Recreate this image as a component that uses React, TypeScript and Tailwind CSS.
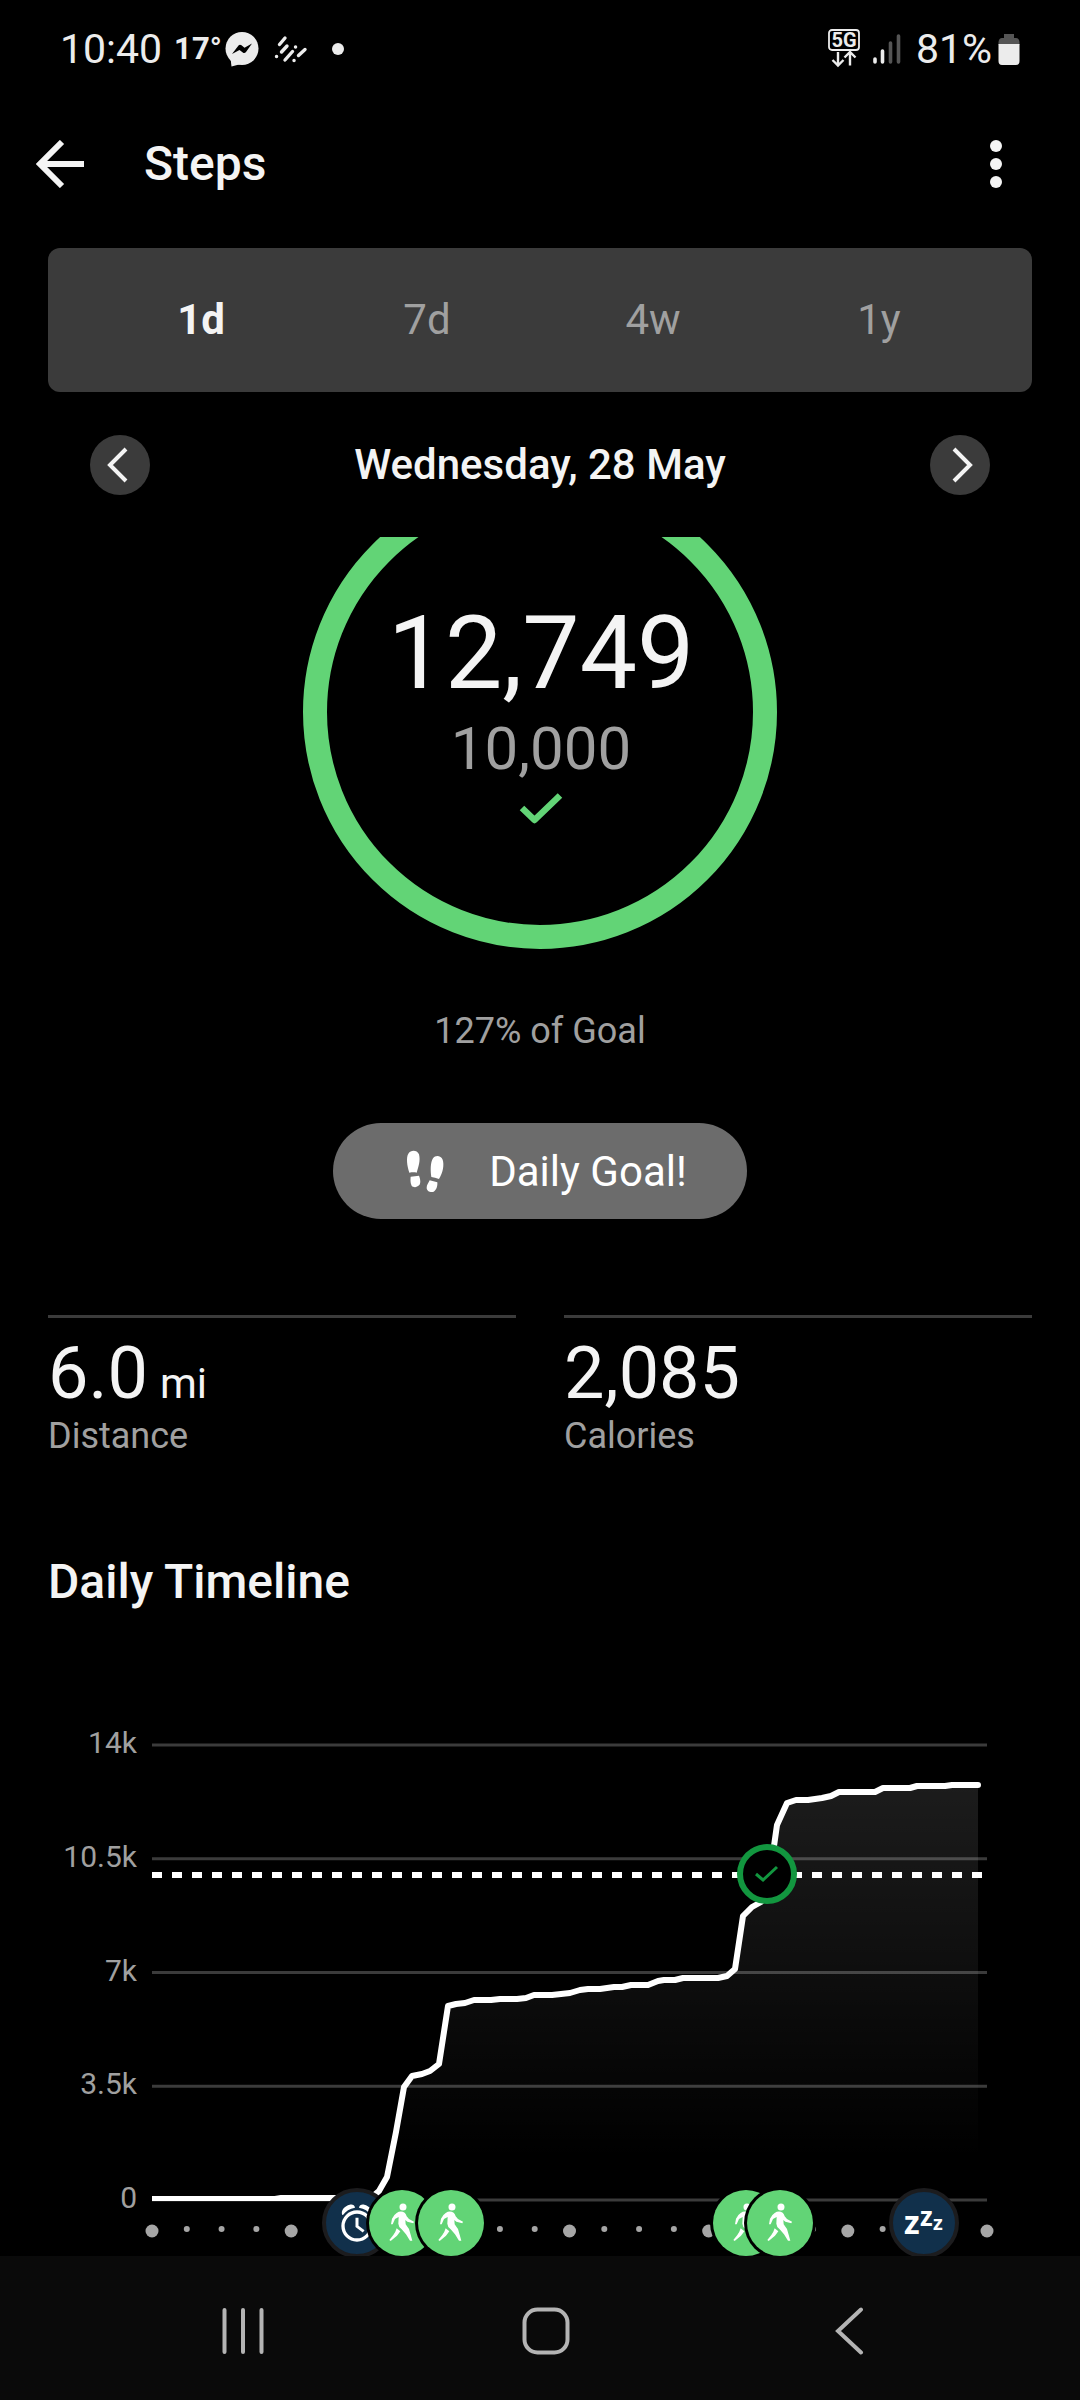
import React, { useState } from 'react';

const RANGES = ['1d', '7d', '4w', '1y'];

const STATS = [
    { value: '6.0', unit: 'mi', label: 'Distance' },
    { value: '2,085', unit: '', label: 'Calories' },
];

const CHART_LEFT = 152;
const CHART_RIGHT = 987;
const CHART_BASE = 590;
const PX_PER_STEP = 455 / 14000;

const Y_TICKS = [
    { value: 14000, label: '14k' },
    { value: 10500, label: '10.5k' },
    { value: 7000, label: '7k' },
    { value: 3500, label: '3.5k' },
    { value: 0, label: '0' },
];

const POINTS = [
    [152, 589], [275, 589], [281, 588], [340, 588], [372, 587], [379, 581], [387, 567], [396, 522],
    [404, 477], [412, 466], [422, 464], [430, 461], [439, 454], [448, 396], [456, 394], [465, 393],
    [474, 390], [491, 390], [500, 389], [517, 389], [526, 388], [534, 385], [552, 385], [570, 383],
    [580, 380], [588, 379], [600, 379], [614, 377], [622, 377], [631, 375], [648, 375], [658, 371],
    [664, 370], [675, 370], [683, 368], [718, 368], [727, 366], [735, 359], [743, 306], [752, 297],
    [761, 292], [770, 264], [777, 215], [787, 193], [796, 190], [808, 190], [822, 188], [831, 186],
    [839, 182], [875, 182], [883, 178], [910, 178], [917, 176], [945, 176], [952, 175], [978, 175],
];

function yFor(steps: number) {
    return CHART_BASE - steps * PX_PER_STEP;
}

function StatusBar() {
    return (
        <div className="flex h-24 items-center justify-between pl-15 pr-[60px] pt-0.5 text-[#ececec]">
            <div className="flex items-center">
                <span className="text-[41px] leading-10">10:40</span>
                <span className="ml-3 text-[31px] font-bold leading-10">17°</span>
                <svg className="ml-0.5 h-9 w-9" viewBox="0 0 36 36">
                    <circle cx="18" cy="17.5" r="16.5" fill="currentColor" />
                    <path d="M6.5 27 L7.5 35.5 L17 33 Z" fill="currentColor" />
                    <path d="M8 23 L14.5 14.5 C15.5 13.4 16.5 13.6 17.5 14.3 L20.5 16.8 L28 12.5 L22 21 C21 22.3 19.8 22.3 18.8 21.5 L15.5 19 Z" fill="#000" />
                </svg>
                <svg className="ml-3 h-8 w-9" viewBox="0 0 36 32" stroke="currentColor" strokeWidth="3.4" strokeLinecap="round">
                    <path d="M13 5 L7.500 11.500 M15 13 L9.500 19 M20.500 18.500 L13 27 M33 16.500 L26.500 22.500 M4.500 23.500 h.1 M23.500 14 h.1 M22 27.500 h.1" />
                </svg>
                <span className="ml-6 h-3 w-3 rounded-full bg-current" />
            </div>
            <div className="flex items-center">
                <svg className="h-10 w-8" viewBox="0 0 32 40" fill="none" stroke="currentColor">
                    <rect x="1" y="1" width="30" height="20" rx="3" strokeWidth="1.8" />
                    <text x="16" y="18" textAnchor="middle" fontSize="20" fontWeight="700" fill="currentColor" stroke="none">5G</text>
                    <path d="M10 23 V36 M4.500 31 L10 36.500 L15.500 31 M22 36.500 V23.500 M16.500 28.500 L22 23 L27.500 28.500" strokeWidth="2.4" />
                </svg>
                <svg className="ml-3 h-8 w-8" viewBox="0 0 32 32" strokeWidth="3.6" strokeLinecap="round">
                    <path d="M3 26 V29 M10.500 18 V29" stroke="currentColor" />
                    <path d="M18.500 10 V29 M26.500 3 V29" stroke="#555" />
                </svg>
                <span className="ml-3 text-[41px] leading-10">81%</span>
                <svg className="ml-1.5 h-8 w-[22px]" viewBox="0 0 22 32">
                    <path d="M6 1 H16 V5 H18 Q21 5 21.500 9 V12 H.5 V9 Q1 5 4 5 H6 Z" fill="#555" />
                    <path d="M.5 11 H21.500 V28 Q21.500 32 18 32 H4 Q.5 32 .5 28 Z" fill="currentColor" />
                </svg>
            </div>
        </div>
    );
}

function WalkBadge({ x }: { x: number }) {
    return (
        <g transform={`translate(${x} 613)`}>
            <circle r="36" fill="#000" />
            <circle r="33" fill="#62d476" />
            <g transform="scale(0.3333)" fill="#fff">
                <circle cx="3" cy="-48" r="10.5" />
                <path d="M-16 -30 Q-4 -38 8 -31 Q12 -28 14 -20 L21 -12 L36 -4 L34 1 L16 -4 L10 -9 L11 4 L21 18 L26 35 L31 53 L24 53 L12 34 L-1 19 Q-11 10 -11 2 L-10 -18 L-21 -12 L-28 4 L-33 4 L-30 -13 Q-24 -25 -16 -30 Z" />
                <path d="M-16 16 L-5 25 L-15 38 L-34 54 L-38 51 L-26 36 Q-19 27 -16 16 Z" />
            </g>
        </g>
    );
}

function DarkBadge({ x, children }: { x: number; children: React.ReactNode }) {
    return (
        <g transform={`translate(${x} 613)`}>
            <circle r="33" fill="#11304b" stroke="#1c1c1e" strokeWidth="4" />
            {children}
        </g>
    );
}

function TimelineChart() {
    const line = POINTS.map(p => p.join(',')).join(' ');
    const step = (CHART_RIGHT - CHART_LEFT) / 24;

    return (
        <svg className="block w-full" viewBox="0 0 1080 646" role="img" aria-label="Daily Timeline">
            <defs>
                <linearGradient id="area" gradientUnits="userSpaceOnUse" x1="0" y1="175" x2="0" y2="590">
                    <stop offset="0" stopColor="#fff" stopOpacity="0.11" />
                    <stop offset="0.9" stopColor="#fff" stopOpacity="0" />
                </linearGradient>
                <clipPath id="plot">
                    <rect x={CHART_LEFT} y="0" width={CHART_RIGHT - CHART_LEFT} height={CHART_BASE + 1} />
                </clipPath>
            </defs>

            {Y_TICKS.map(t => (
                <g key={t.label}>
                    <line x1={CHART_LEFT} x2={CHART_RIGHT} y1={yFor(t.value)} y2={yFor(t.value)} stroke="#3b3b3b" strokeWidth="3" />
                    <text x="137" y={yFor(t.value) + 8} textAnchor="end" fontSize="30" fill="#a0a0a0">{t.label}</text>
                </g>
            ))}

            <polygon points={`${line} 978,590 152,590`} fill="url(#area)" />
            <line x1={CHART_LEFT} x2="982" y1={yFor(10000)} y2={yFor(10000)} stroke="#fff" strokeWidth="6" strokeDasharray="10 10" />
            <polyline points={line} fill="none" stroke="#fff" strokeWidth="6" strokeLinejoin="round" strokeLinecap="round" clipPath="url(#plot)" />

            <circle cx="767" cy="264" r="27" fill="#000" stroke="#12963f" strokeWidth="6" />
            <path d="M756 264 L763 270 L777 257" fill="none" stroke="#12963f" strokeWidth="3" />

            {Array.from({ length: 25 }, (_, i) => (
                <circle
                    key={i}
                    cx={CHART_LEFT + i * step}
                    cy={i % 4 === 0 ? 621 : 619}
                    r={i % 4 === 0 ? 6.5 : 3}
                    fill="#a6a6a6"
                />
            ))}

            <DarkBadge x={357}>
                <g transform="scale(0.3333)" fill="none" stroke="#fff">
                    <circle cx="0" cy="9" r="42" strokeWidth="10" />
                    <path d="M0 -16 V10 L20 25" strokeWidth="9" />
                    <path d="M-44 -24 C-50 -38 -36 -52 -22 -55 C-14 -57 -7 -54 -6 -46 C-22 -43 -34 -36 -42 -24 Z" fill="#fff" stroke="none" />
                    <path d="M44 -24 C50 -38 36 -52 22 -55 C14 -57 7 -54 6 -46 C22 -43 34 -36 42 -24 Z" fill="#fff" stroke="none" />
                </g>
            </DarkBadge>
            <WalkBadge x={402} />
            <WalkBadge x={451} />
            <WalkBadge x={746} />
            <WalkBadge x={780} />
            <DarkBadge x={924}>
                <g fill="#fff" fontWeight="700" className="font-['Open_Sans',sans-serif]">
                    <text x="-20" y="11" fontSize="32">z</text>
                    <text x="-4" y="3" fontSize="26">z</text>
                    <text x="9" y="7" fontSize="20">z</text>
                </g>
            </DarkBadge>
        </svg>
    );
}

export default function App() {
    const [range, setRange] = useState('1d');

    return (
        <div className="flex min-h-screen flex-col bg-black font-[Roboto,sans-serif] text-[#f4f4f4]">
            <StatusBar />

            <header className="flex h-[136px] items-center justify-between px-9">
                <div className="flex items-center gap-15">
                    <button aria-label="Back">
                        <svg className="h-12 w-12" viewBox="0 0 48 48" fill="none" stroke="currentColor" strokeWidth="6">
                            <path d="M48 24 H5 M26 2 L4 24 L26 46" />
                        </svg>
                    </button>
                    <h1 className="text-[48px] font-medium leading-14">Steps</h1>
                </div>
                <button aria-label="More options" className="px-[42px]">
                    <svg className="h-12 w-3" viewBox="0 0 12 48" fill="currentColor">
                        <circle cx="6" cy="6" r="6" />
                        <circle cx="6" cy="24" r="6" />
                        <circle cx="6" cy="42" r="6" />
                    </svg>
                </button>
            </header>

            <main>
                <div className="mx-12 mt-4 grid h-36 grid-cols-4 rounded-xl bg-[#3b3b3b] px-10 pb-0.5">
                    {RANGES.map(r => (
                        <button
                            key={r}
                            onClick={() => setRange(r)}
                            className={`text-[42px] ${range === r ? 'font-bold text-[#f4f4f4]' : 'text-[#a0a0a0]'}`}
                        >
                            {r}
                        </button>
                    ))}
                </div>

                <div className="flex h-[145px] items-center justify-between px-[90px]">
                    <button aria-label="Previous day" className="flex h-15 w-15 items-center justify-center rounded-full bg-[#3b3b3b]">
                        <svg className="h-9 w-9" viewBox="0 0 36 36" fill="none" stroke="currentColor" strokeWidth="4">
                            <path d="M24 2 L8 18 L24 34" />
                        </svg>
                    </button>
                    <h2 className="text-[42px] font-medium">Wednesday, 28 May</h2>
                    <button aria-label="Next day" className="flex h-15 w-15 items-center justify-center rounded-full bg-[#3b3b3b]">
                        <svg className="h-9 w-9" viewBox="0 0 36 36" fill="none" stroke="currentColor" strokeWidth="4">
                            <path d="M12 2 L28 18 L12 34" />
                        </svg>
                    </button>
                </div>

                {/* the ring is scrolled partly under the date row */}
                <section className="grid justify-items-center overflow-hidden">
                    <svg className="col-start-1 row-start-1 -mt-[62px] h-[474px] w-[474px]" viewBox="0 0 474 474" fill="none">
                        <circle cx="237" cy="237" r="225" stroke="#62d476" strokeWidth="24" />
                    </svg>
                    <div className="col-start-1 row-start-1 flex flex-col items-center gap-2 self-start pl-0.5 pt-16">
                        <p className="text-[102px] leading-[104px]">12,749</p>
                        <p className="text-[60px] leading-18 text-[#a0a0a0]">10,000</p>
                        <svg className="h-8 w-11" viewBox="0 0 44 32" fill="none" stroke="#62d476" strokeWidth="6.5" strokeLinejoin="round">
                            <path d="M3 15 L15.500 27 L41 2.500" />
                        </svg>
                    </div>
                </section>

                <p className="mt-15 text-center text-[36px] leading-11 text-[#a0a0a0]">127% of Goal</p>

                <div className="mt-[70px] flex justify-center">
                    <button className="flex h-24 items-center gap-11 rounded-full bg-[#6c6c6c] pl-18 pr-15 text-[42px] text-white">
                        <svg className="h-[45px] w-10" viewBox="310 510 120 135" fill="currentColor">
                            <path d="M323 581 C316 560 313 535 320 524 C328 512 346 513 352 526 C357 545 350 565 345 581 C338 579 330 580 323 581 Z" />
                            <path d="M327 593 L352 590 C356 600 358 612 352 619 C345 626 335 626 330 620 C326 612 326 602 327 593 Z" />
                            <path d="M389 594 C386 575 386 550 394 538 C402 527 418 530 423 542 C428 558 424 580 412 600 C404 597 396 595 389 594 Z" />
                            <path d="M384 604 L407 610 C408 622 404 634 396 638 C386 641 375 636 375 626 C375 618 380 612 384 604 Z" />
                        </svg>
                        Daily Goal!
                    </button>
                </div>

                <section className="mt-24 grid grid-cols-2 gap-12 px-12">
                    {STATS.map(s => (
                        <div key={s.label} className="border-t-3 border-[#3b3b3b] pt-4">
                            <p className="text-[72px] leading-20">
                                {s.value}
                                {s.unit && <span className="ml-3 text-[42px] leading-none">{s.unit}</span>}
                            </p>
                            <p className="text-[36px] leading-11 text-[#a0a0a0]">{s.label}</p>
                        </div>
                    ))}
                </section>

                <h2 className="mt-24 px-12 text-[48px] font-medium leading-14">Daily Timeline</h2>
                <TimelineChart />
            </main>

            <nav className="mt-auto grid h-36 grid-cols-3 bg-[#0a0a0a] pl-[92px] pr-20 pt-1.5 text-[#b4b4b4]">
                <button aria-label="Recent apps" className="flex items-center justify-center">
                    <svg className="h-12 w-12" viewBox="0 0 48 48" stroke="currentColor" strokeWidth="4" strokeLinecap="round">
                        <path d="M5.500 3 V45 M24 3 V45 M42.500 3 V45" />
                    </svg>
                </button>
                <button aria-label="Home" className="flex items-center justify-center">
                    <svg className="h-12 w-12" viewBox="0 0 48 48" fill="none" stroke="currentColor" strokeWidth="4">
                        <rect x="2.500" y="2.500" width="43" height="43" rx="13" />
                    </svg>
                </button>
                <button aria-label="Back" className="flex items-center justify-center">
                    <svg className="h-12 w-12" viewBox="0 0 48 48" fill="none" stroke="currentColor" strokeWidth="4" strokeLinecap="round">
                        <path d="M36 2.500 L13 24 L36 45.500" />
                    </svg>
                </button>
            </nav>
        </div>
    );
}
